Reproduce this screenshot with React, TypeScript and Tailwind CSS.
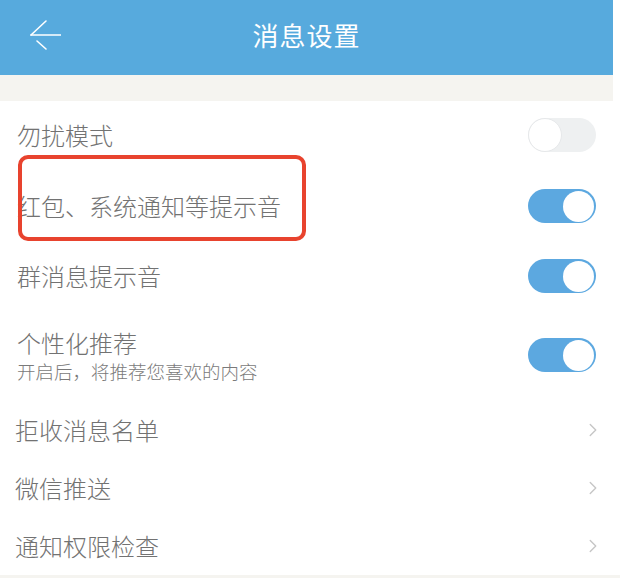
import { ChevronRight } from "lucide-react";

const font = { fontFamily: '"Noto Sans CJK SC", "Noto Sans", sans-serif' };

function Toggle({ on }: { on: boolean }) {
  if (on) {
    return (
      <div className="w-[68px] h-[34px] rounded-full bg-[#5ca8e0] flex items-center justify-end p-[2px]">
        <div className="w-[31px] h-[31px] rounded-full bg-white" />
      </div>
    );
  }
  return (
    <div className="w-[68px] h-[34px] rounded-full bg-[#eef0f1] flex items-center justify-start">
      <div className="w-[34px] h-[34px] rounded-full bg-white border border-[#e6e8ea]" />
    </div>
  );
}

function Chevron() {
  return <ChevronRight size={22} strokeWidth={1.5} className="text-[#c6c6c6]" />;
}

export default function App() {
  return (
    <div className="w-[620px] h-[578px] bg-white overflow-hidden" style={font}>
      {/* 顶部栏 */}
      <div className="w-[613px] h-[75px] bg-[#57aadd] flex items-center relative">
        <svg
          width="40"
          height="40"
          viewBox="0 0 40 40"
          className="ml-[21px] mt-[-4px]"
          fill="none"
          stroke="white"
          strokeWidth="1.6"
          strokeLinecap="round"
        >
          <path d="M10 19 L25 5" />
          <path d="M10 19 L40 19" />
          <path d="M16 25 L25 33" />
        </svg>
        <div className="absolute left-0 right-0 top-[15px] text-center text-white text-[26px] leading-[40px] tracking-[1px]">
          消息设置
        </div>
      </div>
      <div className="w-[613px] h-[26px] bg-[#f5f4f0]" />

      {/* 设置列表 */}
      <div className="flex flex-col text-[#727272] font-light">
        <div className="h-[68px] flex items-center justify-between pl-[17px] pr-[24px]">
          <span className="text-[24px]">勿扰模式</span>
          <Toggle on={false} />
        </div>

        <div className="h-[74px] flex items-center justify-between pl-[22px] pr-[24px] relative">
          <span className="text-[24px] ml-[-5px]">红包、系统通知等提示音</span>
          <Toggle on={true} />
          <div className="absolute left-[18px] top-[-14px] w-[288px] h-[86px] rounded-[10px] border-[4px] border-[#e8432e]" />
        </div>

        <div className="h-[66px] flex items-center justify-between pl-[17px] pr-[24px]">
          <span className="text-[24px]">群消息提示音</span>
          <Toggle on={true} />
        </div>

        <div className="h-[92px] flex items-center justify-between pl-[17px] pr-[24px]">
          <div className="flex flex-col">
            <span className="text-[24px] leading-[32px]">个性化推荐</span>
            <span className="text-[18.5px] leading-[24px] text-[#7a7a7a]">开启后，将推荐您喜欢的内容</span>
          </div>
          <Toggle on={true} />
        </div>

        <div className="h-[58px] flex items-center justify-between pl-[15px] pr-[16px]">
          <span className="text-[24px]">拒收消息名单</span>
          <Chevron />
        </div>

        <div className="h-[58px] flex items-center justify-between pl-[15px] pr-[16px]">
          <span className="text-[24px]">微信推送</span>
          <Chevron />
        </div>

        <div className="h-[58px] flex items-center justify-between pl-[15px] pr-[16px]">
          <span className="text-[24px]">通知权限检查</span>
          <Chevron />
        </div>

        <div className="h-[10px] bg-[#f5f4f0]" />
      </div>
    </div>
  );
}
